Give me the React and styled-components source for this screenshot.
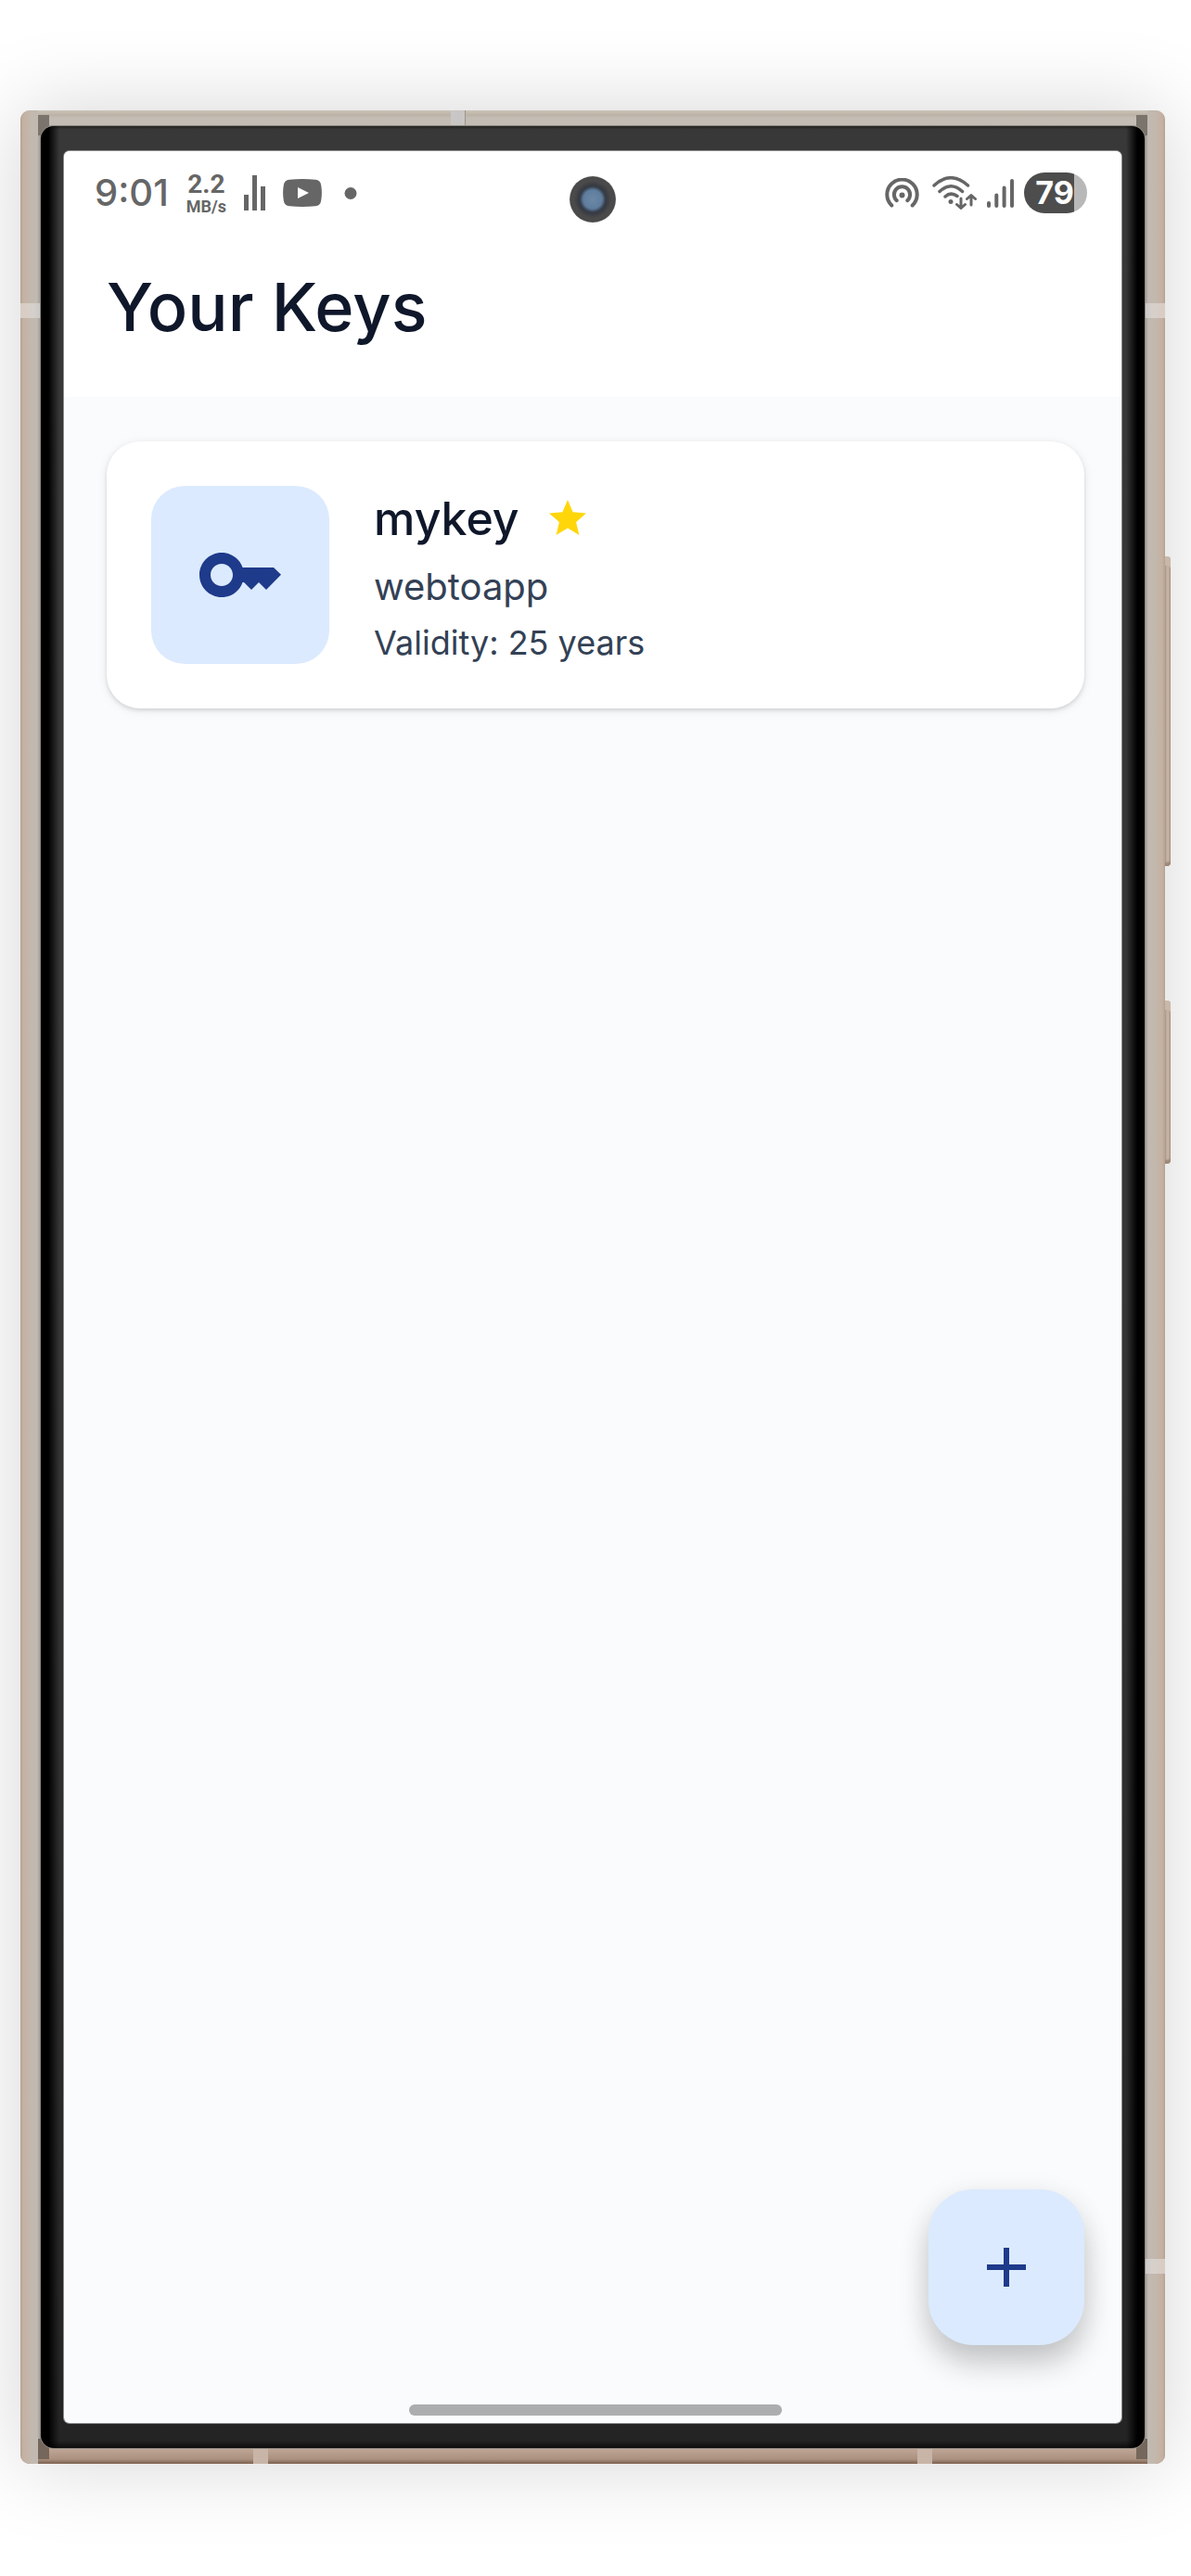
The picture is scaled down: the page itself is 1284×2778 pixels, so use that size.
import React from 'react';
import styled, { createGlobalStyle } from 'styled-components';

const GlobalStyle = createGlobalStyle`
  * { box-sizing: border-box; }
  body {
    margin: 0;
    background: #ffffff;
    font-family: Inter, "Liberation Sans", sans-serif;
  }
  h1, h2, p, ul { margin: 0; padding: 0; }
  ul { list-style: none; }
  svg { display: block; flex: none; }
`;

const Page = styled.div`
  min-height: 100vh;
  display: flex;
  padding: 119px 28px 121px 22px;
  overflow: hidden;
`;

const Frame = styled.div`
  position: relative;
  flex: 1;
  display: flex;
  padding: 17px 22px;
  border-radius: 10px;
  background:
    linear-gradient(to bottom, #cbc5b8 0, #bcb2a5 5px, #c4bdb5 8px, #c3bcb4 17px, transparent 17px),
    linear-gradient(to top, #7a614f 0, #ab917f 5px, #bfa797 17px, transparent 17px),
    linear-gradient(to right, #b3a293 0, #c5b1a2 3px, #c3b8ad 11px, #c0bab3 18px, #99938c 22px,
      #99938c calc(100% - 22px), #c0bab3 calc(100% - 18px), #c3b8ad calc(100% - 11px),
      #c5b1a2 calc(100% - 3px), #b3a293 100%);
  box-shadow: 0 0 90px rgba(0, 0, 0, 0.17);
`;

const EdgeCap = styled.span`
  position: absolute;
  width: 19px;
  height: 28px;
  ${(p) => p.$side}: 0;
  ${(p) => p.$end}: 0;
  border-${(p) => p.$end}-${(p) => p.$side}-radius: 10px;
  background: linear-gradient(to ${(p) => p.$side}, #c0bab3, #c3b8ad 8px, #c5b1a2 16px, #b3a293);
`;

const Notch = styled.span`
  position: absolute;
  width: 12px;
  height: 22px;
  ${(p) => p.$side}: 19px;
  ${(p) => p.$end}: 5px;
  background: ${(p) => (p.$end === 'top' ? '#7b746c' : '#75675b')};
`;

const SideBand = styled.span`
  position: absolute;
  ${(p) => p.$side}: 0;
  top: ${(p) => p.$at};
  width: 22px;
  height: 16px;
  background: linear-gradient(to ${(p) => p.$side}, #c8c8c8, #d6d0cb 8px, #d9ccc2);
`;

const EndBand = styled.span`
  position: absolute;
  ${(p) => p.$end}: 0;
  left: ${(p) => p.$at};
  width: 16px;
  height: 17px;
  background: ${(p) => (p.$end === 'top' ? '#c9c7c5' : '#c8b5a7')};
  border-right: ${(p) => (p.$end === 'top' ? '1px solid #9c948f' : '0')};
`;

const HardwareKey = styled.span`
  position: absolute;
  left: 100%;
  top: ${(p) => p.$top};
  width: 6px;
  height: ${(p) => p.$length};
  border-radius: 0 4px 4px 0;
  background: linear-gradient(to right, #a89484, #c3b3a5 2px, #c6b09f 4px, #a58c7a);
  box-shadow: inset 0 -6px 2px -2px #9d8877, inset 0 10px 0 #c9b8aa;
`;

const Bezel = styled.div`
  position: relative;
  flex: 1;
  display: flex;
  padding: 27px 25px;
  border-radius: 14px;
  background:
    linear-gradient(to right, #000 0, #000 8px, rgba(0, 0, 0, 0) 20px,
      rgba(0, 0, 0, 0) calc(100% - 20px), #000 calc(100% - 8px), #000 100%),
    linear-gradient(to bottom, #242424 0, #383838 4px, #363636 50%, #242424 calc(100% - 8px), #0c0c0c 100%);
  box-shadow: 0 0 0 1px #8f8a82;
`;

const Screen = styled.div`
  position: relative;
  flex: 1;
  display: flex;
  flex-direction: column;
  border-radius: 6px;
  background: #fafbfd;
  box-shadow: 0 0 0 1px #8a8a8a;
`;

const StatusBar = styled.div`
  height: 90px;
  padding: 0 37px 0 33px;
  display: flex;
  align-items: center;
  justify-content: space-between;
  border-radius: 6px 6px 0 0;
  background: #ffffff;
  color: #666666;
`;

const StatusGroup = styled.div`
  display: flex;
  align-items: center;
  gap: ${(p) => p.$gap};
`;

const Clock = styled.span`
  font-size: 40px;
  line-height: 48px;
  font-weight: 500;
`;

const NetSpeed = styled.span`
  display: flex;
  flex-direction: column;
  align-items: center;
  font-family: Roboto, "Liberation Sans", sans-serif;
`;

const SpeedValue = styled.span`
  font-size: 28px;
  line-height: 30px;
  font-weight: 700;
`;

const SpeedUnit = styled.span`
  font-size: 18px;
  line-height: 18px;
  font-weight: 700;
`;

const Battery = styled.span`
  width: 68px;
  height: 44px;
  padding-right: 2px;
  border-radius: 22px;
  display: flex;
  align-items: center;
  justify-content: center;
  background: linear-gradient(to right, #4d4d4d 79%, #b8b8b8 79%);
  color: #ffffff;
  font-size: 34px;
  line-height: 44px;
  font-weight: 700;
`;

const Camera = styled.span`
  position: absolute;
  top: 27px;
  left: 50%;
  width: 50px;
  height: 50px;
  transform: translateX(-50%);
  border-radius: 50%;
  background: radial-gradient(circle, #6d88a6 0, #5f7d9e 10px, #343b46 14px, #3a3d43 16px, #4a4a4b 20px, #4a4a4a 24px, #6a6a6a 25px);
`;

const Header = styled.header`
  padding: 36px 46px 55px;
  background: #ffffff;
`;

const Title = styled.h1`
  color: #0f172a;
  font-size: 72px;
  line-height: 84px;
  font-weight: 500;
`;

const KeyList = styled.ul`
  flex: 1;
  padding: 48px 40px 48px 46px;
`;

const KeyCard = styled.li`
  display: flex;
  align-items: flex-start;
  gap: 48px;
  padding: 48px;
  border-radius: 36px;
  background: #ffffff;
  box-shadow: 0 2px 4px rgba(0, 0, 0, 0.12), 0 2px 12px rgba(0, 0, 0, 0.08);
`;

const KeyTile = styled.div`
  width: 192px;
  height: 192px;
  flex: none;
  display: flex;
  align-items: center;
  justify-content: center;
  border-radius: 36px;
  background: #dbeafe;
  color: #1e3a8a;
`;

const KeyInfo = styled.div`
  display: flex;
  flex-direction: column;
  gap: 10px;
`;

const NameRow = styled.div`
  display: flex;
  align-items: center;
  gap: 28px;
`;

const KeyName = styled.h2`
  color: #0f172a;
  font-size: 50px;
  line-height: 70px;
  font-weight: 500;
`;

const Alias = styled.p`
  color: #334155;
  font-size: 40px;
  line-height: 58px;
`;

const Validity = styled.p`
  color: #334155;
  font-size: 36px;
  line-height: 42px;
`;

const Footer = styled.footer`
  display: flex;
  flex-direction: column;
  padding: 0 40px 8px 46px;
`;

const AddButton = styled.button`
  align-self: flex-end;
  width: 168px;
  height: 168px;
  margin-bottom: 64px;
  padding: 0;
  border: 0;
  border-radius: 48px;
  display: flex;
  align-items: center;
  justify-content: center;
  background: #dbeafe;
  color: #1e3a8a;
  cursor: pointer;
  box-shadow: 0 20px 32px rgba(0, 0, 0, 0.2), 0 4px 32px rgba(0, 0, 0, 0.06);
`;

const HomeIndicator = styled.span`
  align-self: center;
  width: 402px;
  max-width: 60%;
  height: 12px;
  border-radius: 6px;
  background: #acadaf;
`;

const BarsIcon = () => (
  <svg width="23" height="38" viewBox="0 0 23 38" fill="currentColor" aria-hidden="true">
    <path d="M0 21h5v17H0zM9 0h5v38H9zM18 12h5v26h-5z" />
  </svg>
);

const VideoIcon = () => (
  <svg width="42" height="30" viewBox="0 0 42 30" aria-hidden="true">
    <path fill="currentColor" d="M7 .8Q21-.8 35 .8q5.500.6 6.200 6 1.400 8.200 0 16.400-.7 5.400-6.200 6Q21 30.800 7 29.200q-5.500-.6-6.200-6-1.400-8.200 0-16.400Q1.500 1.400 7 .8z" />
    <path fill="#ffffff" d="M16 9l12 6-12 6z" />
  </svg>
);

const DotIcon = () => (
  <svg width="19" height="13" viewBox="0 0 19 13" aria-hidden="true">
    <circle cx="12" cy="6.500" r="6.500" fill="currentColor" />
  </svg>
);

const HotspotIcon = () => (
  <svg width="40" height="32" viewBox="0 0 40 32" fill="none" stroke="currentColor" strokeWidth="4" strokeLinecap="round" aria-hidden="true">
    <path d="M7.300 29.500A16.200 16.200 0 1 1 29.700 29.500" />
    <path d="M12.800 24.200A8.600 8.600 0 1 1 24.200 24.200" />
    <circle cx="18.500" cy="18.500" r="3" fill="currentColor" stroke="none" />
  </svg>
);

const WifiIcon = () => (
  <svg width="48" height="36" viewBox="0 0 48 36" fill="none" stroke="currentColor" strokeWidth="3.500" strokeLinecap="round" strokeLinejoin="round" aria-hidden="true">
    <path d="M2 10Q20-6.500 38.500 10M8 16.500Q20 5 32.500 16.500M14 22Q20 16.500 27 21.500" />
    <circle cx="20" cy="27.500" r="2.500" fill="currentColor" stroke="none" />
    <path strokeWidth="3" d="M31 24v10M26.500 30.500l4.500 4 4.500-4M42 31V20.500M37.500 24.500l4.500-4 4.500 4" />
  </svg>
);

const SignalIcon = () => (
  <svg width="29" height="31" viewBox="0 0 29 31" stroke="currentColor" strokeWidth="4" strokeLinecap="round" aria-hidden="true">
    <path d="M2 26v3M10.300 17.500V29M18.600 9.500V29M27 2v27" />
  </svg>
);

const KeyIcon = () => (
  <svg width="96" height="96" viewBox="0 0 24 24" fill="currentColor" aria-hidden="true">
    <path d="M21 10h-8.350C11.830 7.670 9.610 6 7 6c-3.310 0-6 2.690-6 6s2.690 6 6 6c2.610 0 4.830-1.670 5.650-4H13l2 2 2-2 2 2 4-4.040L21 10zM7 15c-1.650 0-3-1.350-3-3s1.350-3 3-3 3 1.350 3 3-1.350 3-3 3z" />
  </svg>
);

const StarIcon = () => (
  <svg width="48" height="48" viewBox="0 0 24 24" fill="#ffd60a" role="img" aria-label="Default key">
    <path d="M12 17.270L18.180 21l-1.640-7.030L22 9.240l-7.190-.61L12 2 9.190 8.630 2 9.240l5.460 4.730L5.820 21z" />
  </svg>
);

const PlusIcon = () => (
  <svg width="72" height="72" viewBox="0 0 24 24" fill="currentColor" aria-hidden="true">
    <path d="M19 13h-6v6h-2v-6H5v-2h6V5h2v6h6v2z" />
  </svg>
);

const keys = [{ name: 'mykey', alias: 'webtoapp', years: 25, starred: true }];

export default function App() {
  return (
    <>
      <GlobalStyle />
      <Page>
        <Frame>
          <EdgeCap $side="left" $end="top" />
          <EdgeCap $side="right" $end="top" />
          <EdgeCap $side="left" $end="bottom" />
          <EdgeCap $side="right" $end="bottom" />
          <Notch $side="left" $end="top" />
          <Notch $side="right" $end="top" />
          <Notch $side="left" $end="bottom" />
          <Notch $side="right" $end="bottom" />
          <SideBand $side="left" $at="208px" />
          <SideBand $side="right" $at="208px" />
          <SideBand $side="right" $at="calc(100% - 221px)" />
          <EndBand $end="top" $at="464px" />
          <EndBand $end="bottom" $at="251px" />
          <EndBand $end="bottom" $at="calc(100% - 267px)" />
          <HardwareKey $top="481px" $length="334px" />
          <HardwareKey $top="960px" $length="176px" />
          <Bezel>
            <Screen>
              <StatusBar>
                <StatusGroup $gap="19px">
                  <Clock>9:01</Clock>
                  <NetSpeed>
                    <SpeedValue>2.2</SpeedValue>
                    <SpeedUnit>MB/s</SpeedUnit>
                  </NetSpeed>
                  <BarsIcon />
                  <VideoIcon />
                  <DotIcon />
                </StatusGroup>
                <StatusGroup $gap="11px">
                  <HotspotIcon />
                  <WifiIcon />
                  <SignalIcon />
                  <Battery>79</Battery>
                </StatusGroup>
              </StatusBar>
              <Camera />
              <Header>
                <Title>Your Keys</Title>
              </Header>
              <KeyList>
                {keys.map((key) => (
                  <KeyCard key={key.name}>
                    <KeyTile>
                      <KeyIcon />
                    </KeyTile>
                    <KeyInfo>
                      <NameRow>
                        <KeyName>{key.name}</KeyName>
                        {key.starred && <StarIcon />}
                      </NameRow>
                      <Alias>{key.alias}</Alias>
                      <Validity>Validity: {key.years} years</Validity>
                    </KeyInfo>
                  </KeyCard>
                ))}
              </KeyList>
              <Footer>
                <AddButton type="button" aria-label="Add key">
                  <PlusIcon />
                </AddButton>
                <HomeIndicator />
              </Footer>
            </Screen>
          </Bezel>
        </Frame>
      </Page>
    </>
  );
}
